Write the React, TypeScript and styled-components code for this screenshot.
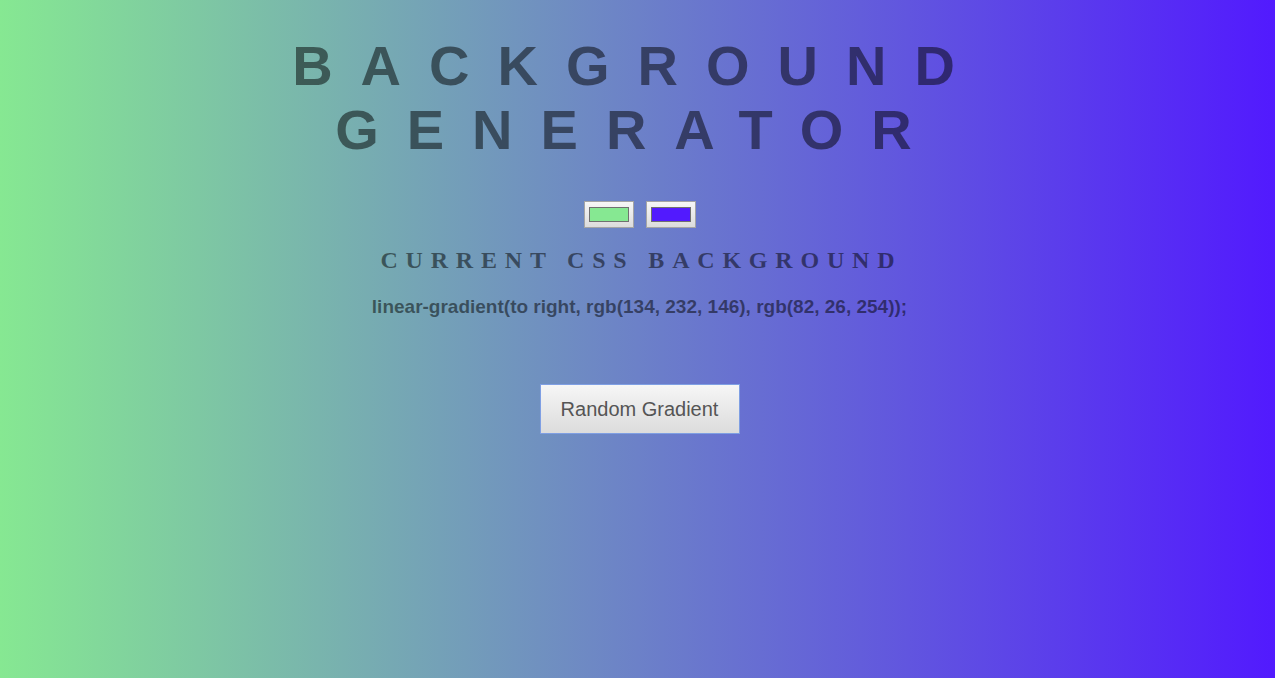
import { useState } from "react";
import { createGlobalStyle, styled } from "styled-components";

const START = "rgb(134, 232, 146)";
const END = "rgb(82, 26, 254)";

const GlobalStyle = createGlobalStyle`
  * {
    box-sizing: border-box;
  }

  html, body {
    margin: 0;
    height: 100%;
  }

  body {
    font-family: "Liberation Sans", Arial, sans-serif;
    color: rgba(0, 0, 0, 0.5);
    overflow: hidden;
  }

  #root {
    height: 100%;
  }
`;

const Page = styled.div<{ $from: string; $to: string }>`
  min-height: 100%;
  display: flex;
  flex-direction: column;
  align-items: center;
  text-align: center;
  padding-top: 34px;
  background: linear-gradient(to right, ${(p) => p.$from}, ${(p) => p.$to});
`;

const Title = styled.h1`
  margin: 0;
  font-family: "Liberation Sans", Arial, sans-serif;
  font-weight: bold;
  font-size: 56px;
  line-height: 64px;
  letter-spacing: 0.5em;
  text-transform: uppercase;
  color: rgba(0, 0, 0, 0.5);
`;

const Line = styled.span`
  display: block;
`;

const Pickers = styled.div`
  display: flex;
  gap: 12px;
  margin: 39px 0 0 4px;
`;

const Picker = styled.label`
  position: relative;
  width: 50px;
  height: 27px;
  padding: 5px 4px;
  border: 1px solid #a5a5a5;
  background: linear-gradient(to bottom, #f7f7f7, #dcdcdc);
  display: flex;
  cursor: pointer;
`;

const Swatch = styled.span<{ $color: string }>`
  flex: 1;
  border: 1px solid #707070;
  background: ${(p) => p.$color};
`;

const HiddenInput = styled.input`
  position: absolute;
  inset: 0;
  opacity: 0;
  width: 100%;
  height: 100%;
  cursor: pointer;
`;

const Subtitle = styled.h2`
  margin: 18px 0 0;
  font-family: "Liberation Serif", "Times New Roman", serif;
  font-weight: bold;
  font-size: 24px;
  line-height: 28px;
  letter-spacing: 7.8px;
  padding-left: 7.8px;
  text-transform: uppercase;
  color: rgba(0, 0, 0, 0.5);
`;

const Output = styled.h3`
  margin: 22px 0 0 4px;
  font-family: "Liberation Sans", Arial, sans-serif;
  font-weight: bold;
  font-size: 19px;
  line-height: 22px;
  color: rgba(0, 0, 0, 0.5);
`;

const RandomButton = styled.button`
  margin: 66px 0 0 4px;
  width: 200px;
  height: 50px;
  font-family: "Liberation Sans", Arial, sans-serif;
  font-size: 20px;
  color: #555;
  border: 1px solid #7f9fe3;
  background: linear-gradient(to bottom, #f6f6f6, #dcdcdc);
  cursor: pointer;
`;

const rand = () => Math.floor(Math.random() * 256);

const toHex = (rgb: string) => {
  const nums = rgb.match(/\d+/g) ?? ["0", "0", "0"];
  return "#" + nums.map((n) => Number(n).toString(16).padStart(2, "0")).join("");
};

const fromHex = (hex: string) => {
  const r = parseInt(hex.slice(1, 3), 16);
  const g = parseInt(hex.slice(3, 5), 16);
  const b = parseInt(hex.slice(5, 7), 16);
  return `rgb(${r}, ${g}, ${b})`;
};

const App = () => {
  const [from, setFrom] = useState(START);
  const [to, setTo] = useState(END);

  const randomize = () => {
    setFrom(`rgb(${rand()}, ${rand()}, ${rand()})`);
    setTo(`rgb(${rand()}, ${rand()}, ${rand()})`);
  };

  return (
    <>
      <GlobalStyle />
      <Page $from={from} $to={to}>
        <Title>
          <Line>Background</Line>
          <Line>Generator</Line>
        </Title>
        <Pickers>
          <Picker>
            <Swatch $color={from} />
            <HiddenInput type="color" value={toHex(from)} onChange={(e) => setFrom(fromHex(e.target.value))} />
          </Picker>
          <Picker>
            <Swatch $color={to} />
            <HiddenInput type="color" value={toHex(to)} onChange={(e) => setTo(fromHex(e.target.value))} />
          </Picker>
        </Pickers>
        <Subtitle>Current CSS Background</Subtitle>
        <Output>linear-gradient(to right, {from}, {to});</Output>
        <RandomButton onClick={randomize}>Random Gradient</RandomButton>
      </Page>
    </>
  );
};

export default App;
